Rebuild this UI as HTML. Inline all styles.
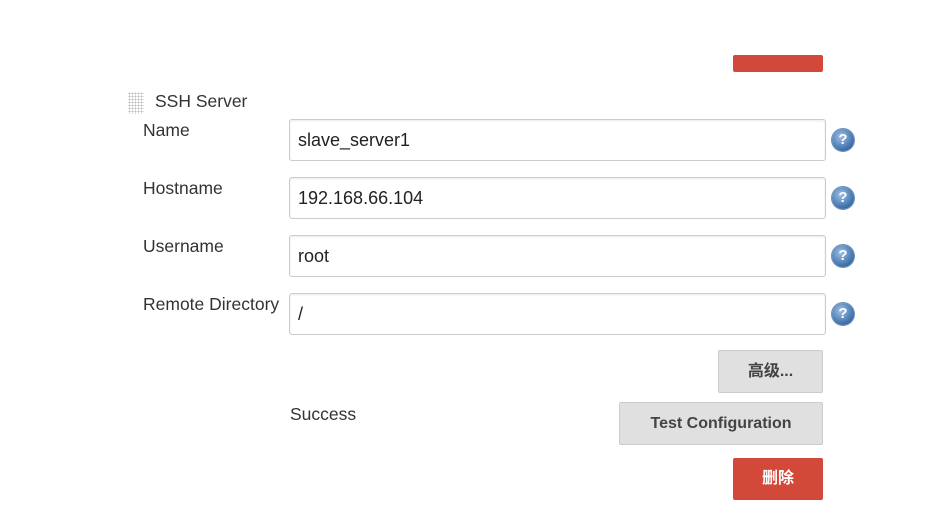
<!DOCTYPE html>
<html><head><style>
body{margin:0;width:944px;height:514px;background:#fff;font-family:"Liberation Sans","Noto Sans CJK SC",sans-serif;position:relative;overflow:hidden}
.a{position:absolute}
.lbl{font-size:17.5px;color:#333}
.inp{position:absolute;left:289px;height:40px;border:1px solid #ccc;border-radius:3px;box-shadow:inset 0 1px 2px rgba(0,0,0,.08);font-size:18px;color:#222;line-height:40px;padding-left:8px;box-sizing:content-box;width:527px}
.help{position:absolute;left:832px;width:22px;height:22px;border-radius:50%;background:radial-gradient(circle at 40% 35%,#9ec0e6,#3a6ea8 70%,#2b5688);color:#fff;font-weight:bold;font-size:15px;text-align:center;line-height:22px;box-shadow:0 0 0 1px #6c8fb8}
.btn{position:absolute;background:#e0e0e0;border:1px solid #ccc;border-radius:2px;font-weight:bold;font-size:16px;color:#444;text-align:center}
.red{position:absolute;background:#d24939;border-radius:2px;color:#fff;font-weight:bold;font-size:16px;text-align:center}
</style></head><body>
<div class="red" style="left:733px;top:55px;width:90px;height:17px"></div>
<div class="a" style="left:128px;top:92px;width:16px;height:22px;background-image:radial-gradient(#bbb 0.8px,transparent 1px);background-size:3px 3px"></div>
<div class="a lbl" style="left:155px;top:91px">SSH Server</div>
<div class="a lbl" style="left:143px;top:120px">Name</div>
<div class="a lbl" style="left:143px;top:178px">Hostname</div>
<div class="a lbl" style="left:143px;top:236px">Username</div>
<div class="a lbl" style="left:143px;top:294px">Remote Directory</div>
<div class="inp" style="top:119px">slave_server1</div>
<div class="inp" style="top:177px">192.168.66.104</div>
<div class="inp" style="top:235px">root</div>
<div class="inp" style="top:293px">/</div>
<div class="help" style="top:129px">?</div>
<div class="help" style="top:187px">?</div>
<div class="help" style="top:245px">?</div>
<div class="help" style="top:303px">?</div>
<div class="btn" style="left:718px;top:350px;width:103px;height:41px;line-height:41px">高级...</div>
<div class="a lbl" style="left:290px;top:404px">Success</div>
<div class="btn" style="left:619px;top:402px;width:202px;height:41px;line-height:41px">Test Configuration</div>
<div class="red" style="left:733px;top:458px;width:90px;height:42px;line-height:42px">删除</div>
</body></html>
